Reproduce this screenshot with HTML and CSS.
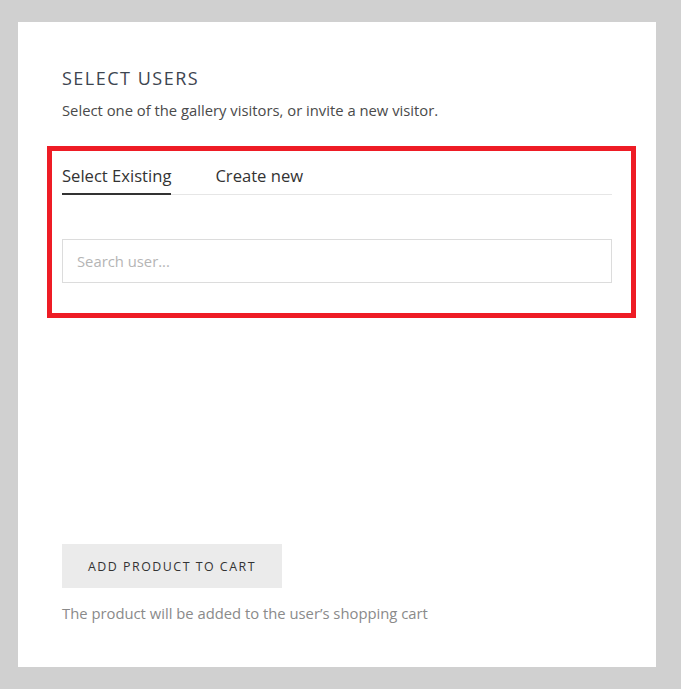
FILE: index.html
```html
<!DOCTYPE html>
<html>
<head>
<meta charset="utf-8">
<link rel="stylesheet" href="styles.css">
</head>
<body>
<div class="card">
  <h1 class="title">SELECT USERS</h1>
  <p class="subtitle">Select one of the gallery visitors, or invite a new visitor.</p>
  <div class="highlight">
    <div class="tabs">
      <span class="tab active">Select Existing</span>
      <span class="tab">Create new</span>
    </div>
    <input class="search" type="text" placeholder="Search user...">
  </div>
  <div class="spacer"></div>
  <button class="add-btn">ADD PRODUCT TO CART</button>
  <p class="note">The product will be added to the user’s shopping cart</p>
</div>
</body>
</html>
```
FILE: styles.css
```css
html, body {
  margin: 0;
  padding: 0;
  background: #d0d0d0;
  font-family: "Open Sans", "Liberation Sans", sans-serif;
}
body {
  padding: 22px 25px 22px 18px;
}
.card {
  background: #fff;
  width: 638px;
  height: 645px;
  box-sizing: border-box;
  padding: 44px 44px 0 44px;
  display: flex;
  flex-direction: column;
}
.title {
  margin: 0;
  font-size: 18px;
  font-weight: 400;
  letter-spacing: 1.5px;
  color: #3d4550;
  line-height: 24px;
}
.subtitle {
  margin: 10px 0 0;
  font-size: 14.8px;
  line-height: 20px;
  color: #4a4a4a;
}
.highlight {
  margin: 26px -24px 0 -15px;
  border: 5px solid #ee1c25;
  padding: 10px 19px 30px 10px;
}
.tabs {
  display: flex;
  gap: 44px;
  border-bottom: 1px solid #e6e6e6;
}
.tab {
  font-size: 16.6px;
  line-height: 22px;
  color: #333;
  padding: 4px 0 7px;
  margin-bottom: -1px;
}
.tab.active {
  border-bottom: 2px solid #333;
  padding-bottom: 6px;
}
.search {
  display: block;
  width: 100%;
  box-sizing: border-box;
  margin-top: 44px;
  height: 44px;
  border: 1px solid #dcdcdc;
  padding: 0 14px;
  font-family: inherit;
  font-size: 14.8px;
  color: #333;
  outline: none;
}
.search::placeholder {
  color: #b5b5b5;
}
.spacer {
  flex: 1;
}
.add-btn {
  align-self: flex-start;
  width: 220px;
  height: 44px;
  background: #ebebeb;
  border: none;
  font-family: inherit;
  font-size: 12.4px;
  letter-spacing: 1.5px;
  color: #333;
  padding: 0;
}
.note {
  margin: 15px 0 44px;
  font-size: 14.8px;
  line-height: 20px;
  color: #8a8a8a;
}
```
